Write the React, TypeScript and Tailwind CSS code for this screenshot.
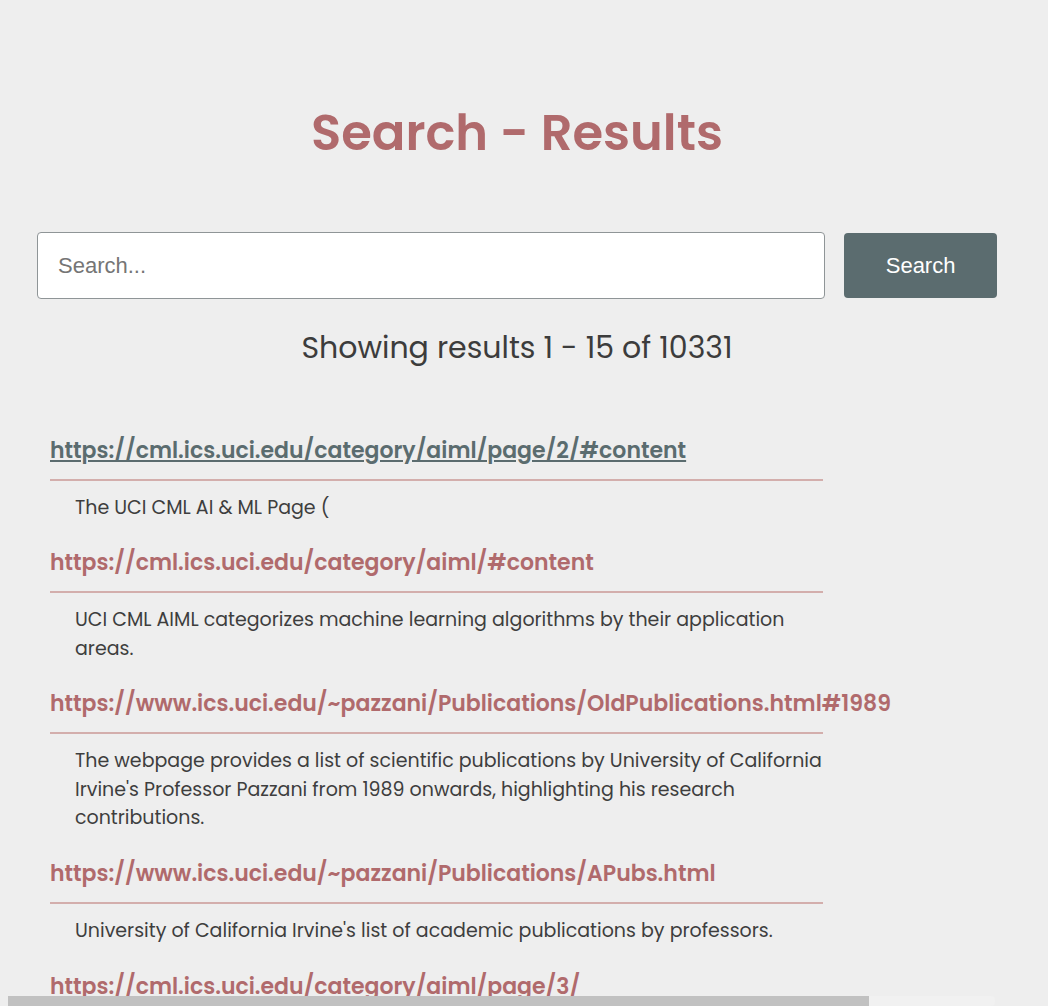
import React from "react";

const results = [
  {
    url: "https://cml.ics.uci.edu/category/aiml/page/2/#content",
    desc: "The UCI CML AI & ML Page (",
    visited: true,
  },
  {
    url: "https://cml.ics.uci.edu/category/aiml/#content",
    desc: "UCI CML AIML categorizes machine learning algorithms by their application areas.",
  },
  {
    url: "https://www.ics.uci.edu/~pazzani/Publications/OldPublications.html#1989",
    desc: "The webpage provides a list of scientific publications by University of California Irvine's Professor Pazzani from 1989 onwards, highlighting his research contributions.",
  },
  {
    url: "https://www.ics.uci.edu/~pazzani/Publications/APubs.html",
    desc: "University of California Irvine's list of academic publications by professors.",
  },
  {
    url: "https://cml.ics.uci.edu/category/aiml/page/3/",
    desc: "UCI CML AI & ML research page listing.",
  },
];

export default function App() {
  return (
    <div
      className="relative h-[1006px] overflow-hidden bg-[#eeeeee]"
      style={{ fontFamily: "'Poppins', 'Open Sans', sans-serif" }}
    >
      <div className="w-[1034px]">
        <h1 className="pt-[100px] text-center text-[49.6px] font-semibold leading-[66px] text-[#b06a6c]">
          Search - Results
        </h1>

        <div className="mt-[66px] flex px-[37px]">
          <input
            type="text"
            placeholder="Search..."
            className="h-[67px] w-[789px] rounded-[4px] border border-[#8f9597] bg-white px-[20px] text-[22px] text-[#333] outline-none placeholder:text-[#757575]"
            style={{ fontFamily: "'Liberation Sans', Arial, sans-serif" }}
          />
          <button
            className="ml-[19px] mt-[1px] h-[65px] w-[153px] rounded-[4px] bg-[#5b6c6f] text-[22px] text-white"
            style={{ fontFamily: "'Liberation Sans', Arial, sans-serif" }}
          >
            Search
          </button>
        </div>

        <p className="mt-[29px] text-center text-[30px] leading-[40px] text-[#3c3c3c]">
          Showing results 1 - 15 of 10331
        </p>

        <div className="mt-[66px] ml-[50px] w-[773px]">
          {results.map((r, i) => (
            <div key={i} className="mb-[24px]">
              <div className="border-b-2 border-[#d3aeac] pb-[11.5px]">
                <a
                  href="#"
                  className={
                    r.visited
                      ? "block whitespace-nowrap text-[22px] font-semibold leading-[33px] text-[#5b6c6f] underline"
                      : "block whitespace-nowrap text-[22px] font-semibold leading-[33px] text-[#b06a6c]"
                  }
                >
                  {r.url}
                </a>
              </div>
              <p className="mt-[13px] pl-[25px] text-[19px] leading-[28.8px] text-[#3e3e3e]">
                {r.desc}
              </p>
            </div>
          ))}
        </div>
      </div>

      <div className="absolute bottom-0 left-[8px] h-[10px] w-[987px] rounded-r-[4px] bg-[#f1f1f1]">
        <div className="h-full w-[861px] bg-[#c1c1c1]" />
      </div>
    </div>
  );
}
